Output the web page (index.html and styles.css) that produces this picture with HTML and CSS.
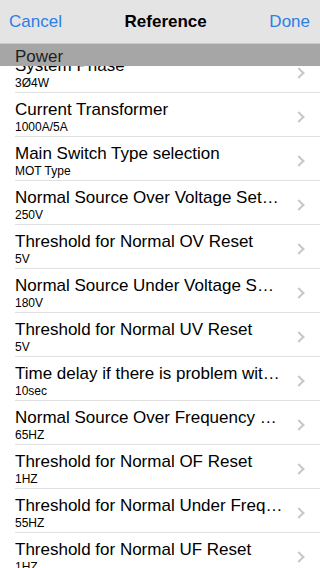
FILE: index.html
```html
<!DOCTYPE html>
<html lang="en">
<head>
	<meta charset="UTF-8">
	<title>Reference</title>
	<link rel="stylesheet" href="styles.css">
</head>
<body>

	<div id="page">
		<div class="navbar">
			<span class="navBtn">Cancel</span>
			<span class="navTitle">Reference</span>
			<span class="navBtn">Done</span>
		</div>

		<div class="content">
			<div class="sectionHead">Power</div>
			<ul class="list">
				<li><div class="txt"><p class="title">System Phase</p><p class="sub">3Ø4W</p></div><i class="chev"></i></li>
				<li><div class="txt"><p class="title">Current Transformer</p><p class="sub">1000A/5A</p></div><i class="chev"></i></li>
				<li><div class="txt"><p class="title">Main Switch Type selection</p><p class="sub">MOT Type</p></div><i class="chev"></i></li>
				<li><div class="txt"><p class="title">Normal Source Over Voltage Setting</p><p class="sub">250V</p></div><i class="chev"></i></li>
				<li><div class="txt"><p class="title">Threshold for Normal OV Reset</p><p class="sub">5V</p></div><i class="chev"></i></li>
				<li><div class="txt"><p class="title">Normal Source Under Voltage Setting</p><p class="sub">180V</p></div><i class="chev"></i></li>
				<li><div class="txt"><p class="title">Threshold for Normal UV Reset</p><p class="sub">5V</p></div><i class="chev"></i></li>
				<li><div class="txt"><p class="title">Time delay if there is problem with source</p><p class="sub">10sec</p></div><i class="chev"></i></li>
				<li><div class="txt"><p class="title">Normal Source Over Frequency Setting</p><p class="sub">65HZ</p></div><i class="chev"></i></li>
				<li><div class="txt"><p class="title">Threshold for Normal OF Reset</p><p class="sub">1HZ</p></div><i class="chev"></i></li>
				<li><div class="txt"><p class="title">Threshold for Normal Under Frequency Reset</p><p class="sub">55HZ</p></div><i class="chev"></i></li>
				<li><div class="txt"><p class="title">Threshold for Normal UF Reset</p><p class="sub">1HZ</p></div><i class="chev"></i></li>
			</ul>
		</div>
	</div>

</body>
</html>
```

FILE: styles.css
```css
* {padding: 0; margin: 0; box-sizing: border-box;}
li {list-style: none;}
html, body {height: 100%; overflow: hidden;}
body {font-family: "Liberation Sans", Arial, sans-serif; background: #fff; color: #000;}

#page {width: 320px; height: 568px; display: flex; flex-direction: column;}

.navbar {height: 44px; flex: none; display: flex; align-items: center; justify-content: space-between; padding: 1px 10px 0 9px; background: #e4e4e4; border-bottom: 1px solid #c9c9c9; font-size: 17px;}
.navBtn {color: #2e7ee5;}
.navTitle {font-weight: bold;}

.content {flex: 1; position: relative; overflow: hidden; padding-top: 5px;}
.sectionHead {position: absolute; left: 0; top: 0; width: 100%; height: 22px; z-index: 2; background: #a6a6a6; color: #1e1e1e; font-size: 17px; line-height: 25px; padding-left: 15px;}

.list li {height: 44px; display: flex; align-items: center; padding-left: 15px; position: relative;}
.list li::after {content: ""; position: absolute; left: 15px; right: 0; bottom: 0; border-bottom: 1px solid #e0e0e0;}
.list .txt {flex: 1; min-width: 0; padding-top: 3px;}
.list .title {font-size: 17px; line-height: 20px; white-space: nowrap; overflow: hidden; text-overflow: ellipsis;}
.list .sub {font-size: 12px; line-height: 14px;}
.list .chev {flex: none; width: 8px; height: 8px; margin: 4px 17px 0 12px; border-right: 2px solid #c7c7cc; border-top: 2px solid #c7c7cc; transform: rotate(45deg);}
```
